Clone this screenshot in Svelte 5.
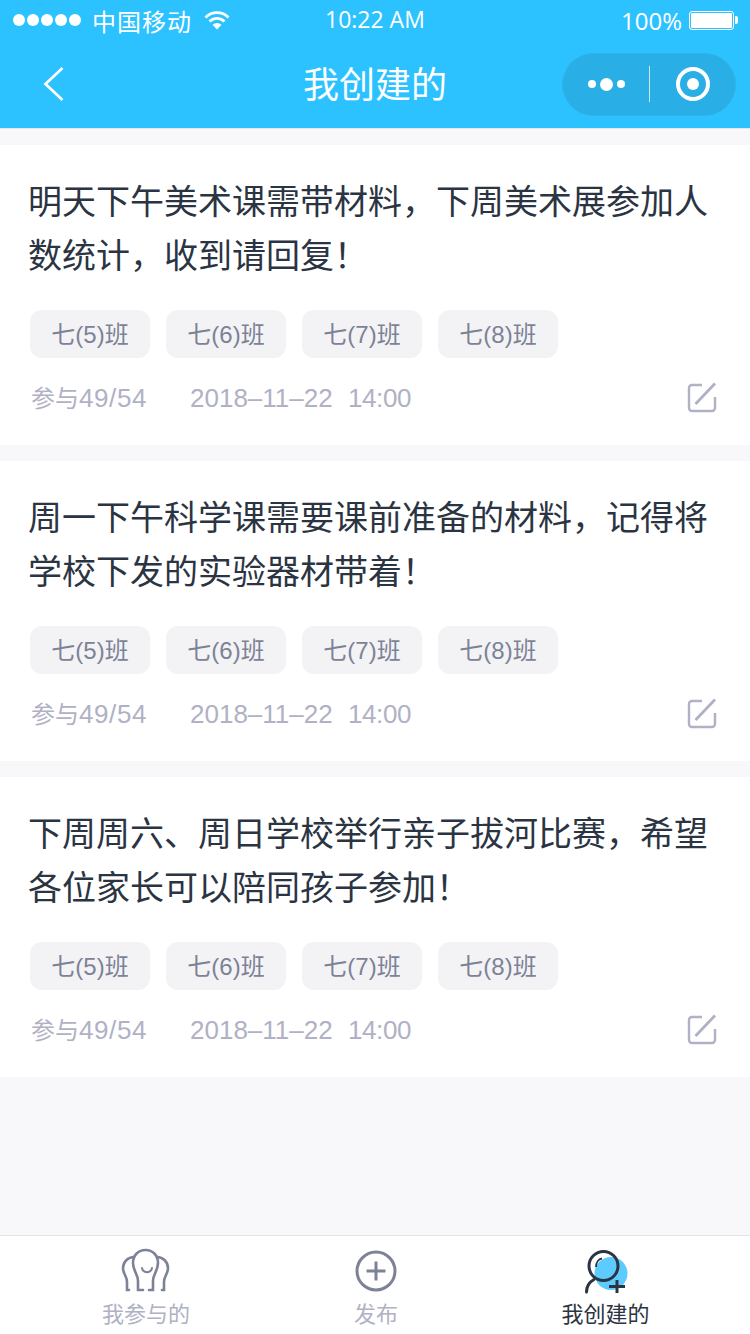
<script>
  const classes = ['七(5)班', '七(6)班', '七(7)班', '七(8)班'];
  const notices = [
    '明天下午美术课需带材料，下周美术展参加人数统计，收到请回复！',
    '周一下午科学课需要课前准备的材料，记得将学校下发的实验器材带着！',
    '下周周六、周日学校举行亲子拔河比赛，希望各位家长可以陪同孩子参加！'
  ];
</script>

<div class="page">
  <header class="top">
    <div class="status">
      <div class="status-left">
        <span class="dots"><i></i><i></i><i></i><i></i><i></i></span>
        <span class="carrier">中国移动</span>
        <svg class="wifi" width="26" height="20" viewBox="0 0 26 20">
          <path d="M1.500 7.500a16 16 0 0 1 23 0" fill="none" stroke="#fff" stroke-width="2.800" />
          <path d="M5.500 11.500a10.500 10.500 0 0 1 15 0" fill="none" stroke="#fff" stroke-width="2.800" />
          <path d="M13 19.500l-4.500-4.800a6.500 6.500 0 0 1 9 0z" fill="#fff" />
        </svg>
      </div>
      <span class="time">10:22 AM</span>
      <div class="status-right">
        <span>100%</span>
        <span class="battery"><b></b></span>
        <span class="nub"></span>
      </div>
    </div>
    <nav class="bar">
      <svg class="back" width="24" height="38" viewBox="0 0 24 38">
        <path d="M19.500 3L2.500 19 19.500 35" fill="none" stroke="#fff" stroke-width="2.700" />
      </svg>
      <h1>我创建的</h1>
      <div class="capsule">
        <span class="more"><i></i><i class="big"></i><i></i></span>
        <span class="sep"></span>
        <span class="target"><i></i></span>
      </div>
    </nav>
  </header>

  <main class="list">
    {#each notices as text}
      <section class="card">
        <p class="title">{text}</p>
        <div class="tags">
          {#each classes as c}
            <span class="tag">{c}</span>
          {/each}
        </div>
        <div class="meta">
          <span class="joined"><small>参与</small><em>49/54</em></span>
          <span class="date">2018–11–22</span>
          <span class="hour">14:00</span>
          <svg class="edit" width="30" height="32" viewBox="0 0 30 32">
            <path d="M15 4H5a3 3 0 0 0-3 3v20a3 3 0 0 0 3 3h20a3 3 0 0 0 3-3V16" fill="none" stroke="#b0b1c4" stroke-width="2.400" />
            <path d="M8.500 23L28 2.500" fill="none" stroke="#b0b1c4" stroke-width="2.800" />
          </svg>
        </div>
      </section>
    {/each}
  </main>

  <footer class="tabs">
    <div class="tab">
      <svg width="48" height="44" viewBox="0 0 48 44">
        <g fill="none" stroke="#7d8297" stroke-width="2.600" stroke-linecap="round">
          <path d="M21 41h-5V32c0-7-5-10-5-18C11 6 16.500 1 23.500 1S36 6 36 14c0 8-5 11-5 18v9h-4" />
          <path d="M12 8C6 8 1 13 1 19c0 6 4 8 4 14v8h2" />
          <path d="M35 8c6 0 11 5 11 11 0 6-4 8-4 14v8h-2" />
          <path d="M20 19c1 5.500 9 5.500 10 0" stroke-width="2" />
        </g>
      </svg>
      <span>我参与的</span>
    </div>
    <div class="tab">
      <svg width="44" height="44" viewBox="0 0 44 44">
        <circle cx="22" cy="22" r="19" fill="none" stroke="#7d8297" stroke-width="3" />
        <path d="M12.500 22h19M22 12.500v19" fill="none" stroke="#7d8297" stroke-width="3" />
      </svg>
      <span>发布</span>
    </div>
    <div class="tab on">
      <svg width="44" height="44" viewBox="0 0 44 44">
        <circle cx="27" cy="24.500" r="16.500" fill="#5ecbff" />
        <circle cx="19.500" cy="17" r="14.500" fill="none" stroke="#2b3442" stroke-width="3" />
        <path d="M12 18c0-4.500 2.500-8 6-8.500" fill="none" stroke="#2b3442" stroke-width="1.800" />
        <path d="M2.500 43c0-5 3-10 7.500-12.500" fill="none" stroke="#2b3442" stroke-width="3" stroke-linecap="round" />
        <path d="M25 37.500h16M33 31v13" fill="none" stroke="#2b3442" stroke-width="3" />
      </svg>
      <span>我创建的</span>
    </div>
  </footer>
</div>

<style>
  :global(body) { margin: 0; background: #f8f7fa; }
  .page {
    width: 750px;
    height: 1334px;
    display: flex;
    flex-direction: column;
    background: #f8f7fa;
    font-family: "Liberation Sans", "Noto Sans CJK SC", sans-serif;
    overflow: hidden;
  }

  .top { background: #2cc2ff; color: #fff; height: 128px; flex-shrink: 0; border-bottom: 1px solid #e4e6ea; }
  .status {
    height: 40px;
    padding: 0 12px 0 13px;
    display: flex;
    align-items: center;
    justify-content: space-between;
    position: relative;
    font-family: "Open Sans", "Noto Sans CJK SC", sans-serif;
    font-size: 24px;
  }
  .status-left { display: flex; align-items: center; }
  .dots { display: flex; gap: 2px; margin-right: 11px; }
  .dots i { width: 12px; height: 12px; border-radius: 50%; background: #fff; }
  .carrier { margin-right: 12px; letter-spacing: 1px; }
  .time { position: absolute; left: 325px; top: 3px; font-size: 23px; }
  .status-right { display: flex; align-items: center; }
  .battery {
    margin-left: 7px;
    width: 45px;
    height: 19px;
    box-sizing: border-box;
    border: 1px solid #fff;
    border-radius: 3px;
    padding: 1px;
    display: flex;
  }
  .battery b { flex: 1; background: #fff; border-radius: 1px; }
  .nub { width: 3px; height: 8px; background: #fff; border-radius: 0 2px 2px 0; margin-left: 1px; }

  .bar { height: 88px; display: flex; align-items: center; position: relative; padding: 0 14px 0 43px; justify-content: space-between; }
  .bar h1 {
    position: absolute;
    left: 0;
    right: 0;
    top: 17px;
    margin: 0;
    text-align: center;
    font-size: 36px;
    line-height: 50px;
    font-weight: 400;
    font-family: "Noto Sans CJK SC", sans-serif;
  }
  .capsule {
    width: 174px;
    height: 63px;
    box-sizing: border-box;
    border-radius: 32px;
    background: #29aee6;
    border: 1px solid #2db4ec;
    display: flex;
    align-items: center;
  }
  .more { width: 86px; display: flex; align-items: center; justify-content: center; gap: 4px; padding-left: 1px; box-sizing: border-box; }
  .more i { width: 8px; height: 8px; border-radius: 50%; background: #fff; }
  .more i.big { width: 13px; height: 13px; }
  .sep { width: 1px; height: 36px; background: #cfe6f0; }
  .target {
    margin-left: 26px;
    width: 34px;
    height: 34px;
    box-sizing: border-box;
    border: 4px solid #fff;
    border-radius: 50%;
    display: flex;
    align-items: center;
    justify-content: center;
  }
  .target i { width: 12px; height: 12px; border-radius: 50%; background: #fff; }

  .list { flex: 1; padding-top: 16px; display: flex; flex-direction: column; gap: 16px; }
  .card { background: #fff; height: 300px; box-sizing: border-box; padding: 28px 30px 0 28px; }
  .title {
    margin: 0;
    font-family: "Noto Sans CJK SC", sans-serif;
    font-size: 34px;
    line-height: 54px;
    color: #2b3442;
    height: 108px;
  }
  .tags { display: flex; gap: 16px; margin: 29px 0 0 2px; }
  .tag {
    width: 120px;
    height: 48px;
    box-sizing: border-box;
    padding-bottom: 3px;
    border-radius: 12px;
    background: #f3f3f5;
    color: #7d8297;
    font-size: 24px;
    display: flex;
    align-items: center;
    justify-content: center;
  }
  .meta {
    display: flex;
    align-items: baseline;
    margin: 21px 0 0 2px;
    height: 36px;
    color: #b0b1c4;
    font-size: 26px;
  }
  .joined { width: 160px; padding-left: 1px; box-sizing: border-box; }
  .joined small { font-size: 24px; }
  .joined em { font-style: normal; letter-spacing: 0.6px; }
  .date { width: 158px; }
  .hour { letter-spacing: -0.4px; }
  .edit { margin-left: auto; margin-right: 3px; align-self: center; }

  .tabs {
    height: 99px;
    flex-shrink: 0;
    box-sizing: border-box;
    border-top: 1px solid #e4e4e8;
    background: #fff;
    display: grid;
    grid-template-columns: 230px 230px 229px;
    padding-left: 31px;
  }
  .tab { display: flex; flex-direction: column; align-items: center; padding-top: 13px; color: #b0b1c4; font-size: 22px; font-family: "Noto Sans CJK SC", sans-serif; }
  .tab svg { display: block; height: 44px; overflow: visible; }
  .tab span { line-height: 32px; margin-top: 3px; }
  .tab.on { color: #2b3442; }
</style>
